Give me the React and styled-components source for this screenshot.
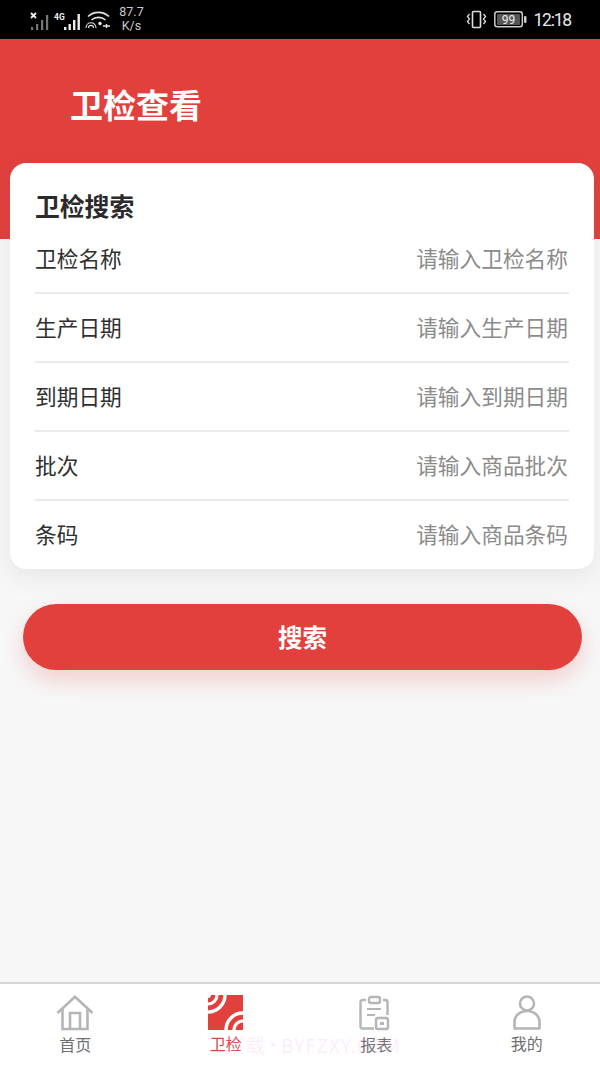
import React from "react";
import styled, { createGlobalStyle } from "styled-components";

const Global = createGlobalStyle`
  html, body { margin: 0; padding: 0; background: #f7f7f7; }
  * { box-sizing: border-box; }
  body { font-family: "Noto Sans CJK SC", "Noto Sans", sans-serif; }
`;
const Page = styled.div`
  position: relative; width: 600px; height: 1067px; display: flex; flex-direction: column;
  background: #f7f7f7; overflow: hidden;
`;
const StatusBar = styled.div`
  height: 39px; flex: none; background: #000; color: #ddd; display: flex; align-items: center;
  justify-content: space-between; padding: 0 29px 0 29px;
`;
const StatusGroup = styled.div`display: flex; align-items: center; gap: ${p => p.$gap || 5}px;`;
const Speed = styled.div`
  font: 12.5px/14px "Roboto", sans-serif; text-align: center; color: #ccc; width: 27px; margin: -1px 0 0 4px;
`;
const Clock = styled.span`
  font: 17.5px "Roboto", sans-serif; letter-spacing: -1.2px; color: #e8e8e8; margin-left: -1px;
`;
const Header = styled.header`
  height: 200px; flex: none; background: #e2403d; padding: 41px 0 0 70px;
`;
const Heading = styled.h1`
  margin: 0; font-size: 33px; line-height: 48px; font-weight: 700; color: #fff;
`;
const Card = styled.section`
  margin: -76px 6px 0 10px; height: 406px; background: #fff; border-radius: 16px; padding: 24px 25px 0 25px;
  box-shadow: 0 8px 24px rgba(90, 90, 110, .10); position: relative;
`;
const CardTitle = styled.h2`
  margin: 0; font-size: 24.8px; line-height: 36px; font-weight: 700; color: #2a2a2a;
`;
const Row = styled.div`
  height: ${p => (p.$last ? 68 : 69)}px; display: flex; align-items: center; justify-content: space-between;
  border-bottom: ${p => (p.$last ? "none" : "2px solid #ebebeb")};
  font-size: 21.7px; padding: 0 1px ${p => (p.$last ? 4 : 2)}px 0;
`;
const RowsWrap = styled.div`margin: 2px 0 0 0;`;
const Label = styled.span`color: #303030;`;
const Hint = styled.span`color: #8b8b8b;`;
const SearchButton = styled.button`
  display: block; margin: 35px 18px 0 23px; height: 66px; width: 559px; flex: none; border: none;
  border-radius: 33px; background: #e2403d; color: #fff; font: 700 24.5px "Noto Sans CJK SC", sans-serif;
  padding: 0 0 2px 0;
  box-shadow: 0 10px 22px rgba(228, 64, 62, .22);
`;
const TabBar = styled.nav`
  margin-top: auto; height: 85px; flex: none; background: #fff; border-top: 2px solid #d6d6d6;
  display: grid; grid-template-columns: repeat(4, 150.5px); padding-top: 11px;
`;
const Tab = styled.div`
  display: flex; flex-direction: column; align-items: center; gap: 1px;
  font-size: 16px; line-height: 24px; color: ${p => (p.$active ? "#d8484a" : "#6f6f6f")};
  svg { display: block; }
`;
const Watermark = styled.div`
  position: absolute; left: 226px; top: 1031px; font: 19px "Noto Sans CJK SC", sans-serif;
  color: rgba(246, 190, 235, .28); letter-spacing: 1.1px; word-spacing: -8px; white-space: nowrap; pointer-events: none;
`;

const SimA = () => (
  <svg width="22" height="22" viewBox="0 0 22 22">
    <path d="M2 4l5 5M7 4L2 9" stroke="#eee" strokeWidth="1.800" />
    <g fill="#777"><rect x="2" y="18" width="2.200" height="3" /><rect x="7" y="15" width="2.200" height="6" /><rect x="12" y="11" width="2.200" height="10" /><rect x="17" y="6" width="2.200" height="15" /></g>
  </svg>
);
const Sim4G = () => (
  <svg width="28" height="22" viewBox="0 0 28 22" fill="#eee">
    <text x="0" y="11" fontFamily="Roboto, sans-serif" fontWeight="700" fontSize="8.500">4G</text>
    <rect x="10" y="18" width="2.400" height="3" /><rect x="14.500" y="15" width="2.400" height="6" />
    <rect x="19" y="11" width="2.400" height="10" /><rect x="23.500" y="5" width="2.400" height="16" />
  </svg>
);
const Wifi = () => (
  <svg width="26" height="20" viewBox="0 0 26 20" fill="none" stroke="#e4e4e4" strokeWidth="1.600">
    <path d="M3 6.500C9 1 18 1 24 6.500M6.500 10c4-3.500 10-3.500 14 0" />
    <path d="M1 18c0-7 10-7 10 0M3.500 18c0-3.500 5-3.500 5 0" strokeWidth="1.100" />
    <circle cx="15" cy="13.500" r="1.700" fill="#eee" stroke="none" />
    <path d="M18 16h7M21.500 14v4" strokeWidth="1.400" />
  </svg>
);
const Vibrate = () => (
  <svg width="21" height="19" viewBox="0 0 21 19" fill="none" stroke="#ddd" strokeWidth="1.600">
    <rect x="6.500" y="1.500" width="8" height="16" rx="1" />
    <path d="M3.500 4L1.500 6.500 3.500 9l-2 2.500 2 2.500M17.500 4l2 2.500-2 2.500 2 2.500-2 2.500" strokeWidth="1.300" />
  </svg>
);
const Battery = () => (
  <svg width="33" height="17" viewBox="0 0 33 17">
    <rect x=".8" y=".8" width="27.500" height="15" rx="2.500" fill="none" stroke="#ccc" strokeWidth="1.500" />
    <rect x="3" y="3" width="23" height="11" rx="1" fill="#555" />
    <rect x="30" y="5" width="2.500" height="7" rx="1" fill="#ccc" />
    <text x="14.500" y="13" textAnchor="middle" fontFamily="Roboto, sans-serif" fontSize="12" fill="#eee">99</text>
  </svg>
);
const HomeIcon = () => (
  <svg width="38" height="36" viewBox="0 0 38 36" fill="none" stroke="#b5b5b5" strokeWidth="2.600">
    <path d="M1.500 18L19 1.800 36.500 18" />
    <path d="M6.500 14v20h25V14" />
    <path d="M14 34V18h10v16" />
  </svg>
);
const CheckIcon = () => (
  <svg width="35" height="35" viewBox="0 0 35 35">
    <defs><clipPath id="checkSquare"><rect width="35" height="35" /></clipPath></defs>
    <g clipPath="url(#checkSquare)" fill="none">
      <rect width="35" height="35" fill="#e2403d" />
      <circle cx="0" cy="0" r="3" fill="#fff" />
      <circle cx="0" cy="0" r="9" stroke="#fff" strokeWidth="3.200" />
      <circle cx="0" cy="0" r="17" stroke="#fff" strokeWidth="3.400" />
      <circle cx="35" cy="35" r="9" stroke="#fff" strokeWidth="3.200" />
      <circle cx="35" cy="35" r="17" stroke="#fff" strokeWidth="3.400" />
    </g>
  </svg>
);
const ReportIcon = () => (
  <svg width="36" height="36" viewBox="0 0 36 36" fill="none" stroke="#b5b5b5" strokeWidth="2.400">
    <rect x="11" y="2" width="11" height="6" rx="2" />
    <path d="M8 5H4.500a2 2 0 0 0-2 2v24.500a2 2 0 0 0 2 2H16M25 5h2.500a2 2 0 0 1 2 2v13" />
    <path d="M9 14h14M9 20h8" strokeWidth="2" />
    <rect x="18" y="23" width="12" height="11" rx="2" />
    <rect x="22" y="27" width="4" height="3" fill="#b5b5b5" stroke="none" />
  </svg>
);
const UserIcon = () => (
  <svg width="28" height="35" viewBox="0 0 28 35" fill="none" stroke="#b5b5b5" strokeWidth="2.600">
    <circle cx="14" cy="8.500" r="7" />
    <path d="M1.500 33.500V27c0-6 5-11 12.500-11s12.500 5 12.500 11v6.500z" strokeLinejoin="round" />
  </svg>
);

const rows = [
  ["卫检名称", "请输入卫检名称"],
  ["生产日期", "请输入生产日期"],
  ["到期日期", "请输入到期日期"],
  ["批次", "请输入商品批次"],
  ["条码", "请输入商品条码"],
];

export default function App() {
  return (
    <Page>
      <Global />
      <StatusBar>
        <StatusGroup $gap={3}>
          <SimA /><Sim4G /><Wifi /><Speed>87.7<br />K/s</Speed>
        </StatusGroup>
        <StatusGroup $gap={7}>
          <Vibrate /><Battery /><Clock>12:18</Clock>
        </StatusGroup>
      </StatusBar>
      <Header><Heading>卫检查看</Heading></Header>
      <Card>
        <CardTitle>卫检搜索</CardTitle>
        <RowsWrap>
          {rows.map(([l, h], i) => (
            <Row key={l} $last={i === rows.length - 1}><Label>{l}</Label><Hint>{h}</Hint></Row>
          ))}
        </RowsWrap>
      </Card>
      <SearchButton>搜索</SearchButton>
      <TabBar>
        <Tab><HomeIcon />首页</Tab>
        <Tab $active><CheckIcon />卫检</Tab>
        <Tab><ReportIcon />报表</Tab>
        <Tab><UserIcon />我的</Tab>
      </TabBar>
      <Watermark>下载 • BYFZXY.COM</Watermark>
    </Page>
  );
}
